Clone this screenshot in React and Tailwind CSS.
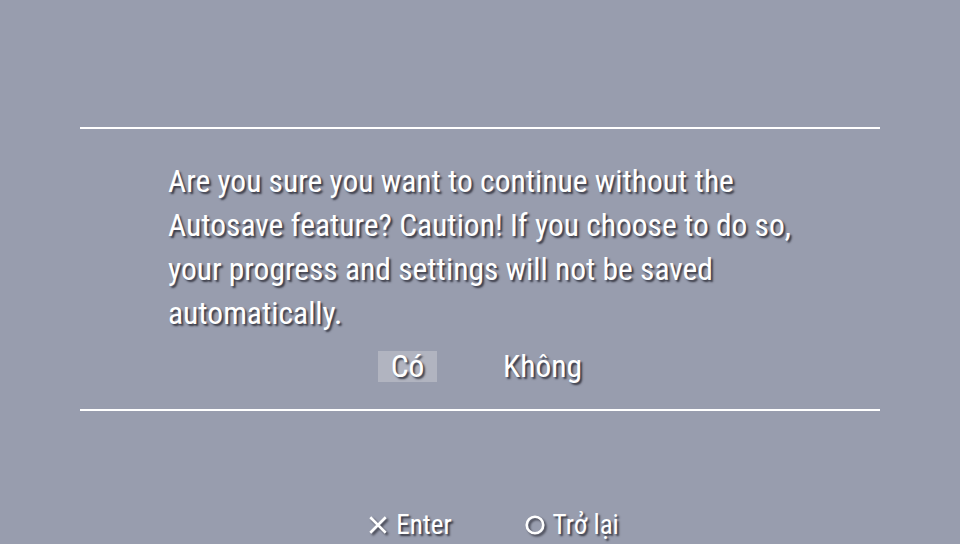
export default function App() {
  const shadow = "[text-shadow:2px_2px_2px_rgba(30,30,40,0.8)]";
  return (
    <div className="h-[544px] w-[960px] overflow-hidden bg-[#989dae] text-white" style={{ fontFamily: '"Roboto Condensed", "DejaVu Sans Condensed", Roboto, sans-serif' }}>
      <div className="h-[127px]" />
      <div className="mx-[80px] border-t-2 border-b-2 border-white h-[284px] flex flex-col">
        <div className={`pl-[88px] pt-[31px] text-[31.5px] leading-[44px] ${shadow}`}>
          <p>Are you sure you want to continue without the</p>
          <p>Autosave feature? Caution! If you choose to do so,</p>
          <p>your progress and settings will not be saved</p>
          <p>automatically.</p>
        </div>
        <div className={`flex justify-center gap-[46px] mt-[15px] pl-[20px] text-[31.5px] leading-[31px] ${shadow}`}>
          <div className="w-[59px] bg-[#b1b4c0] flex justify-center">Có</div>
          <div className="px-[20px]">Không</div>
        </div>
      </div>
      <div className={`flex justify-center gap-[72px] mt-[99px] pl-[26px] text-[27px] leading-[30px] ${shadow}`}>
        <div className="flex items-center gap-[7px]">
          <svg width="22" height="22" viewBox="0 0 20 20" className="drop-shadow-[2px_2px_1px_rgba(30,30,40,0.7)]">
            <path d="M3 3 L17 17 M17 3 L3 17" stroke="white" strokeWidth="2.4" />
          </svg>
          <span>Enter</span>
        </div>
        <div className="flex items-center gap-[7px]">
          <svg width="22" height="22" viewBox="0 0 20 20" className="drop-shadow-[2px_2px_1px_rgba(30,30,40,0.7)]">
            <circle cx="10" cy="10" r="7.5" stroke="white" strokeWidth="2.4" fill="none" />
          </svg>
          <span>Trở lại</span>
        </div>
      </div>
    </div>
  );
}
